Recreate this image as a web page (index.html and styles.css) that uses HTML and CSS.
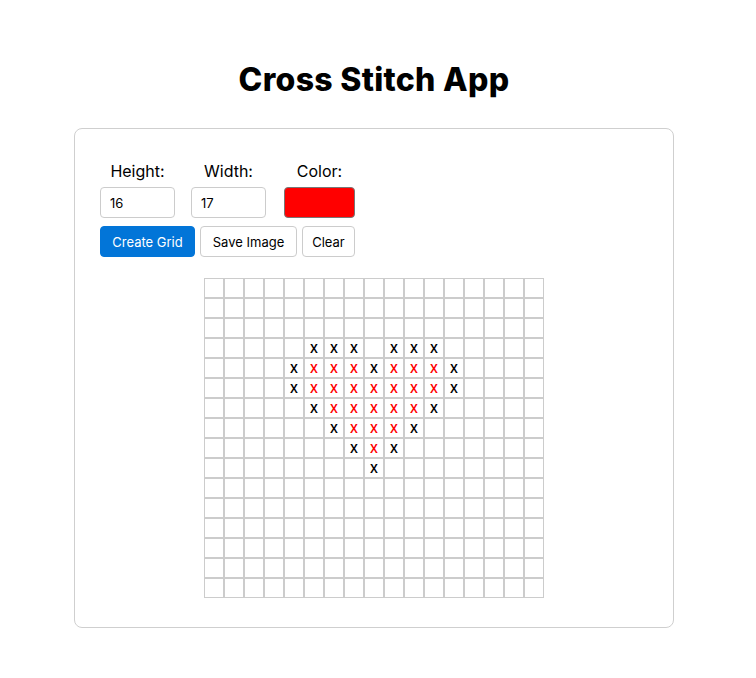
FILE: index.html
```html
<!DOCTYPE html>
<html lang="en">
<head>
<meta charset="utf-8">
<title>Cross Stitch App</title>
<link rel="stylesheet" href="styles.css">
</head>
<body>
<h1 class="title">Cross Stitch App</h1>
<main class="card">
  <div class="controls">
    <label class="field field-h">
      <span class="field-label">Height:</span>
      <input class="num-input" type="text" value="16">
    </label>
    <label class="field field-w">
      <span class="field-label">Width:</span>
      <input class="num-input" type="text" value="17">
    </label>
    <div class="field field-c">
      <span class="field-label">Color:</span>
      <span class="color-swatch"></span>
    </div>
  </div>
  <div class="buttons">
    <button class="btn btn-primary">Create Grid</button>
    <button class="btn btn-save">Save Image</button>
    <button class="btn btn-clear">Clear</button>
  </div>
  <div class="grid" id="grid"></div>
</main>
<script>
  var rows = 16, cols = 17;
  var marks = {
    3: {5:'b',6:'b',7:'b',9:'b',10:'b',11:'b'},
    4: {4:'b',5:'r',6:'r',7:'r',8:'b',9:'r',10:'r',11:'r',12:'b'},
    5: {4:'b',5:'r',6:'r',7:'r',8:'r',9:'r',10:'r',11:'r',12:'b'},
    6: {5:'b',6:'r',7:'r',8:'r',9:'r',10:'r',11:'b'},
    7: {6:'b',7:'r',8:'r',9:'r',10:'b'},
    8: {7:'b',8:'r',9:'b'},
    9: {8:'b'}
  };
  var g = document.getElementById('grid');
  for (var r = 0; r < rows; r++) {
    for (var c = 0; c < cols; c++) {
      var d = document.createElement('div');
      d.className = 'cell';
      var m = marks[r] && marks[r][c];
      if (m) {
        d.textContent = 'x';
        d.className += m === 'r' ? ' cell-red' : ' cell-black';
      }
      g.appendChild(d);
    }
  }
</script>
</body>
</html>
```
FILE: styles.css
```css
* { box-sizing: border-box; }
body {
  margin: 0;
  padding-right: 8px;
  font-family: "Inter", "Open Sans", sans-serif;
  color: #000;
  background: #fff;
}
.title {
  margin: 0;
  padding-top: 60px;
  height: 128px;
  text-align: center;
  font-size: 32px;
  line-height: 40px;
  font-weight: 800;
  letter-spacing: 0.3px;
}
.card {
  width: 600px;
  height: 500px;
  margin: 0 auto;
  border: 1px solid #cfcfcf;
  border-radius: 8px;
  padding: 30px 25px 0 25px;
}
.controls {
  display: flex;
  gap: 16px;
}
.field {
  display: flex;
  flex-direction: column;
  align-items: center;
  width: 75px;
}
.field-c {
  width: 71px;
  margin-left: 2px;
}
.field-label {
  font-size: 16px;
  line-height: 24px;
  margin-bottom: 4px;
}
.num-input {
  width: 75px;
  height: 31px;
  border: 1px solid #ccc;
  border-radius: 4px;
  padding: 0 9px;
  font-family: inherit;
  font-size: 13px;
  color: #000;
  outline: none;
}
.color-swatch {
  display: block;
  width: 71px;
  height: 31px;
  background: #ff0000;
  border: 1px solid #777;
  border-radius: 4px;
}
.buttons {
  display: flex;
  gap: 5px;
  margin-top: 8px;
}
.btn {
  height: 31px;
  border: 1px solid #ccc;
  border-radius: 4px;
  background: #fff;
  font-family: inherit;
  font-size: 13px;
  color: #000;
  padding: 0;
}
.btn-primary {
  width: 95px;
  background: #0275d8;
  border-color: #0275d8;
  color: #fff;
}
.btn-save { width: 97px; }
.btn-clear { width: 53px; }
.grid {
  display: grid;
  grid-template-columns: repeat(17, 20px);
  grid-auto-rows: 20px;
  width: max-content;
  margin: 21px auto 0;
}
.cell {
  background: #fff;
  border: 1px solid #cccccc;
  display: flex;
  align-items: center;
  justify-content: center;
  font-size: 15px;
  font-weight: 500;
  line-height: 1;
  padding-bottom: 1px;
}
.cell-red { color: #ff0000; }
.cell-black { color: #000; }
```
